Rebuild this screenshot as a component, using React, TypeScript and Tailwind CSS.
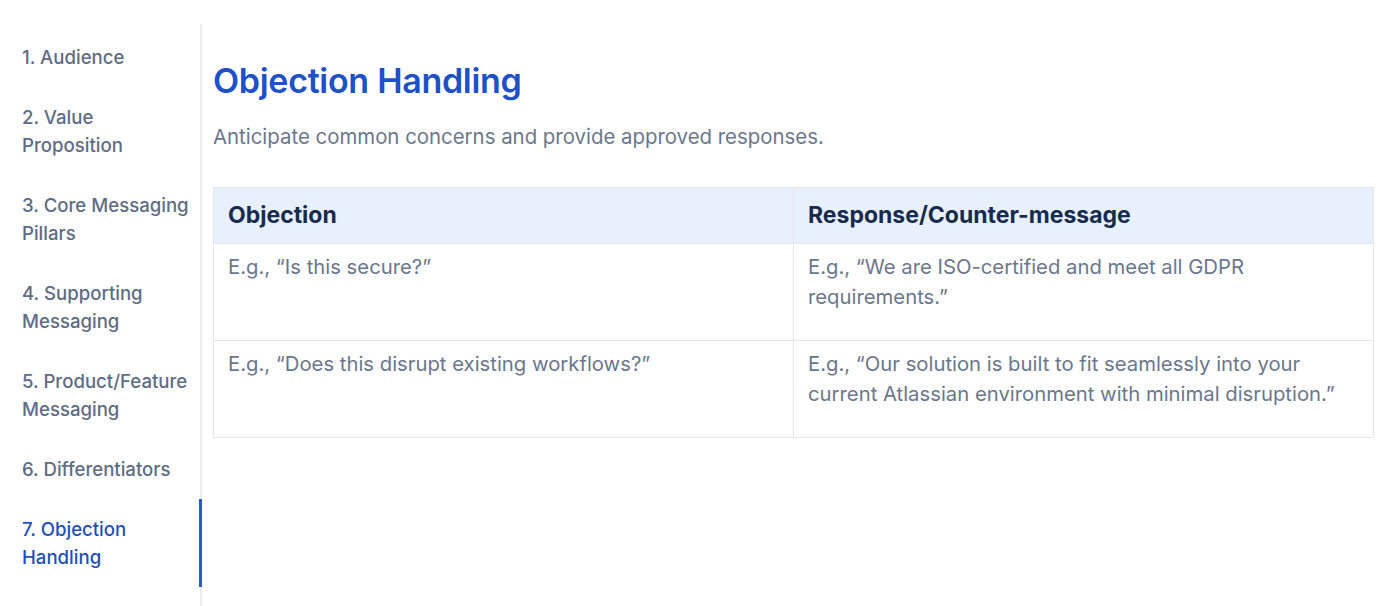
import React from 'react';

const SECTIONS = [
  '1. Audience',
  '2. Value Proposition',
  '3. Core Messaging Pillars',
  '4. Supporting Messaging',
  '5. Product/Feature Messaging',
  '6. Differentiators',
  '7. Objection Handling',
];

const ROWS = [
  {
    objection: 'E.g., “Is this secure?”',
    response: 'E.g., “We are ISO-certified and meet all GDPR requirements.”',
  },
  {
    objection: 'E.g., “Does this disrupt existing workflows?”',
    response:
      'E.g., “Our solution is built to fit seamlessly into your current Atlassian environment with minimal disruption.”',
  },
];

export default function App() {
  const active = 6;

  return (
    <div className="flex min-h-screen bg-white font-['Inter','Liberation_Sans',sans-serif]">
      {/* sidebar */}
      <nav className="mt-6 w-[202px] shrink-0 border-r-2 border-[#ebecf0] pt-[3px]">
        {SECTIONS.map((label, i) => (
          <div
            key={label}
            className={`-mr-[2px] border-r-[3px] py-[16px] pl-[22px] pr-[8px] text-[18.6px] leading-[28px] font-medium ${
              i === active ? 'border-[#2c5cc5] text-[#1f4fb9]' : 'border-transparent text-[#5e6c84]'
            }`}
          >
            {label}
          </div>
        ))}
      </nav>

      {/* content */}
      <main className="flex-1 pl-[11px] pr-[26px] pt-[62px]">
        <h1 className="text-[34px] leading-[38px] font-semibold tracking-[-0.3px] text-[#1e50c8]">
          Objection Handling
        </h1>
        <p className="mt-[23px] text-[20.4px] leading-[28px] text-[#6b778c]">
          Anticipate common concerns and provide approved responses.
        </p>

        <table className="mt-[36px] w-full table-fixed border-collapse border border-[#e4e6eb]">
          <thead>
            <tr className="bg-[#e9f0fd]">
              <th className="h-[56px] w-1/2 border border-[#e4e6eb] px-[14px] text-left text-[23px] font-bold text-[#172b4d]">
                Objection
              </th>
              <th className="h-[56px] w-1/2 border border-[#e4e6eb] px-[14px] text-left text-[23px] font-bold text-[#172b4d]">
                Response/Counter-message
              </th>
            </tr>
          </thead>
          <tbody>
            {ROWS.map((row) => (
              <tr key={row.objection}>
                <td className="h-[97px] border border-[#e4e6eb] px-[14px] pt-[8px] pb-[28px] align-top text-[20.3px] leading-[30px] text-[#6b778c]">
                  {row.objection}
                </td>
                <td className="h-[97px] border border-[#e4e6eb] px-[14px] pt-[8px] pb-[28px] align-top text-[20.3px] leading-[30px] text-[#6b778c]">
                  {row.response}
                </td>
              </tr>
            ))}
          </tbody>
        </table>
      </main>
    </div>
  );
}
